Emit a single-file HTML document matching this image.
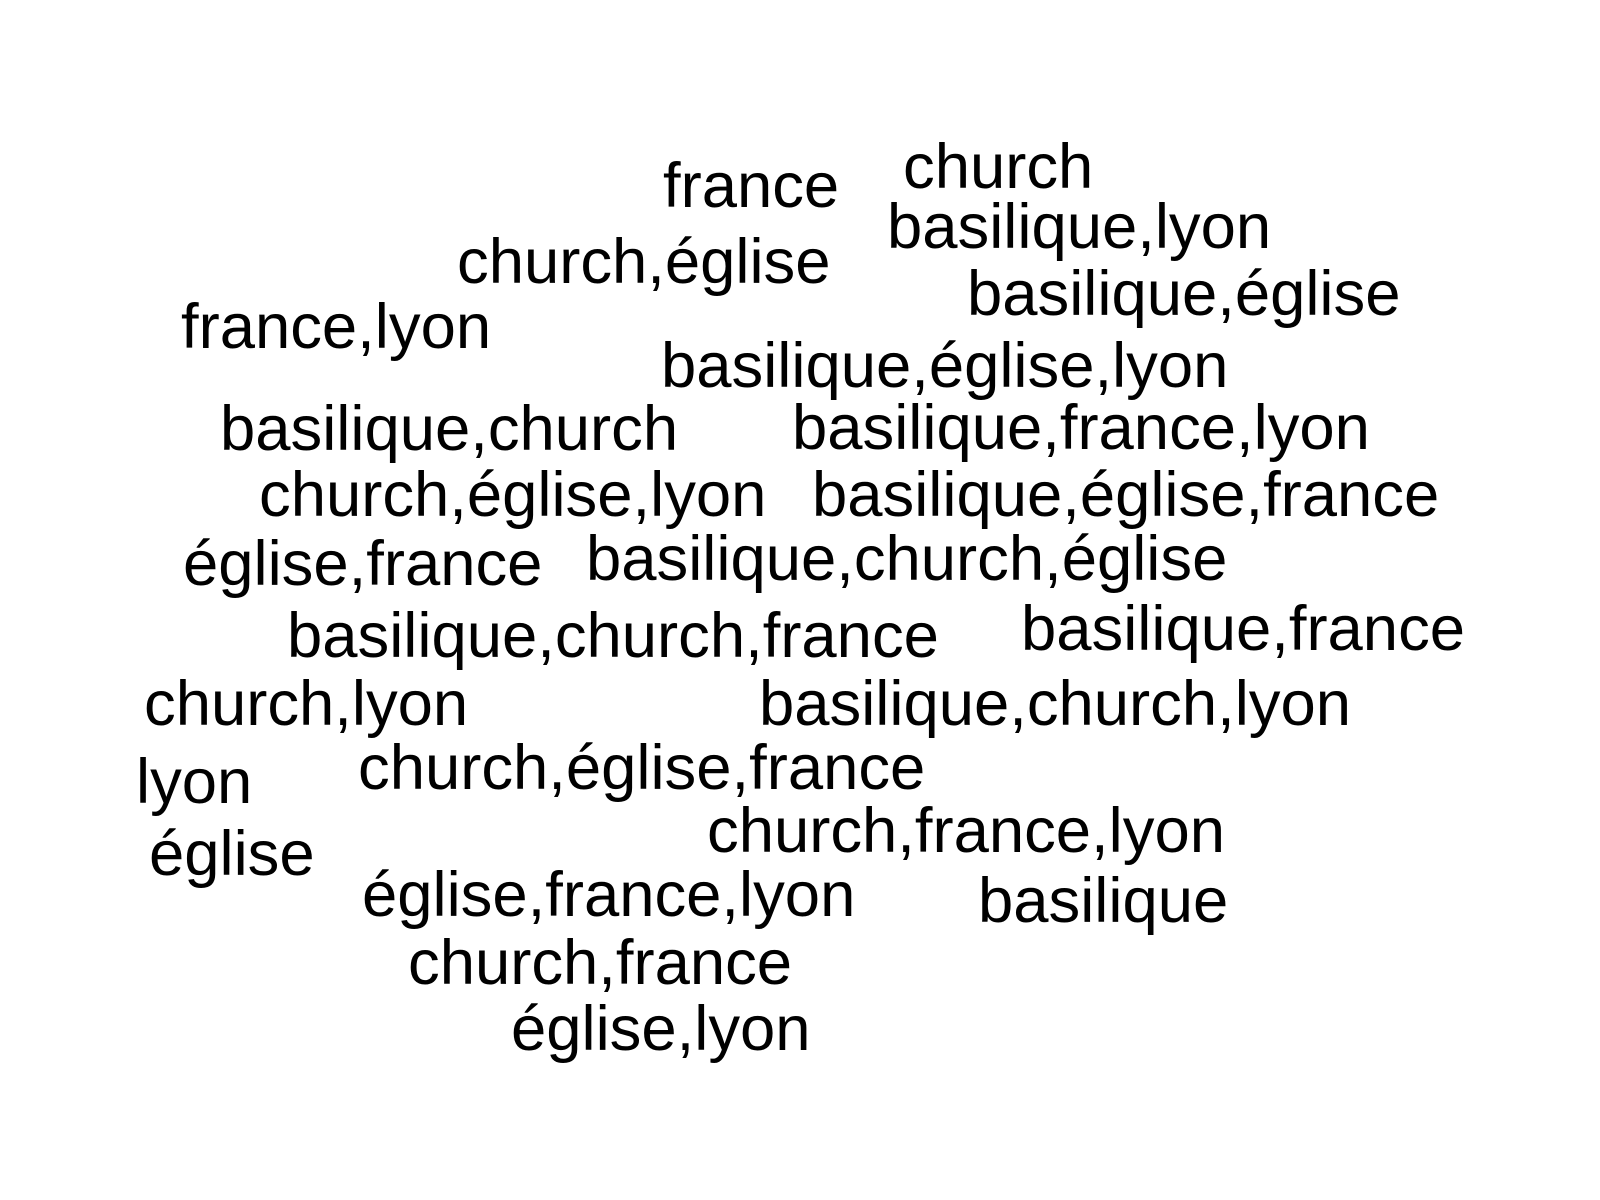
<!DOCTYPE html>
<html><head><meta charset="utf-8"><style>
html,body{margin:0;padding:0;background:#fff;width:1600px;height:1200px;overflow:hidden}
div{position:absolute;font-family:"Liberation Sans",Arial,sans-serif;font-size:63.4px;line-height:62px;color:#000;white-space:nowrap}
</style></head><body>
<div style="left:663px;top:155px">france</div>
<div style="left:903px;top:136px">church</div>
<div style="left:887px;top:196px">basilique,lyon</div>
<div style="left:457px;top:231px">church,église</div>
<div style="left:967px;top:263px">basilique,église</div>
<div style="left:181px;top:296px">france,lyon</div>
<div style="left:661px;top:335px">basilique,église,lyon</div>
<div style="left:220px;top:398px">basilique,church</div>
<div style="left:792px;top:397px">basilique,france,lyon</div>
<div style="left:259px;top:464px">church,église,lyon</div>
<div style="left:812px;top:464px">basilique,église,france</div>
<div style="left:183px;top:533px">église,france</div>
<div style="left:586px;top:528px">basilique,church,église</div>
<div style="left:287px;top:605px">basilique,church,france</div>
<div style="left:1021px;top:598px">basilique,france</div>
<div style="left:144px;top:673px">church,lyon</div>
<div style="left:759px;top:673px">basilique,church,lyon</div>
<div style="left:136px;top:751px">lyon</div>
<div style="left:358px;top:737px">church,église,france</div>
<div style="left:149px;top:823px">église</div>
<div style="left:707px;top:800px">church,france,lyon</div>
<div style="left:362px;top:864px">église,france,lyon</div>
<div style="left:978px;top:870px">basilique</div>
<div style="left:408px;top:932px">church,france</div>
<div style="left:511px;top:998px">église,lyon</div>
</body></html>
